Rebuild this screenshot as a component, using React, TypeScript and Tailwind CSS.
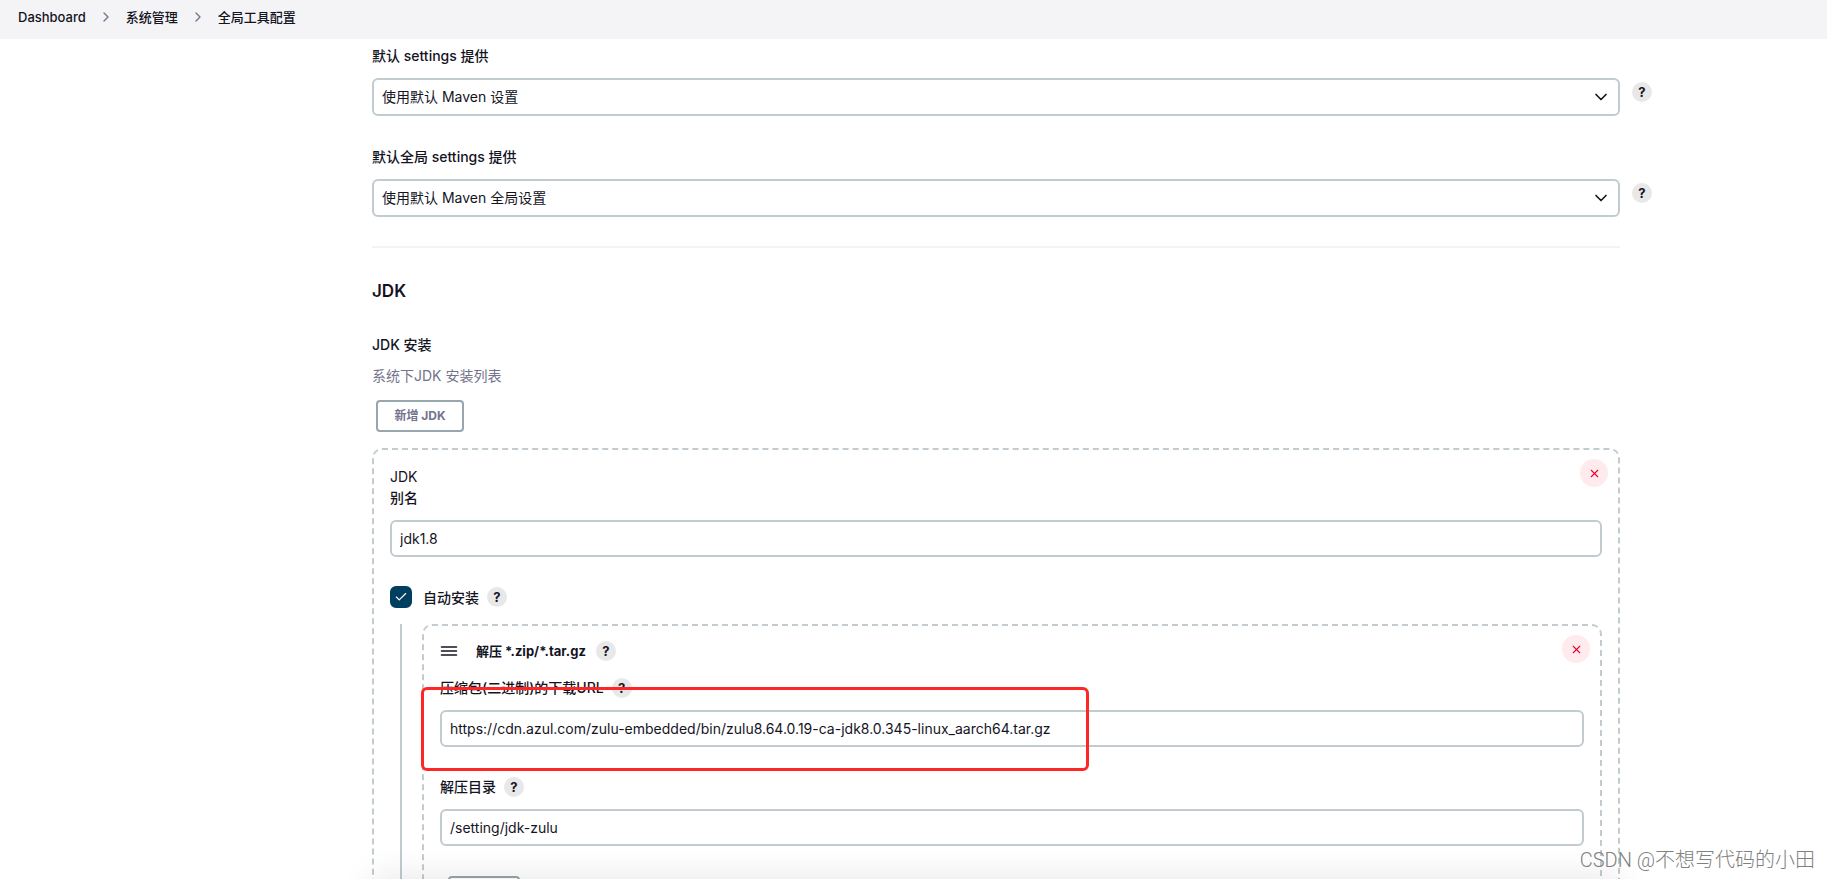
import { ReactNode } from "react";
import { Check, ChevronDown, ChevronRight, X } from "lucide-react";

const inputClass =
  "block h-[37px] w-full rounded-md border-2 border-[#c1cbd0] bg-white px-2 text-sm text-[#14141f] outline-none focus:border-[#0b6aa2]";

function HelpButton({ topic }: { topic: string }) {
  return (
    <button
      type="button"
      aria-label={`帮助: ${topic}`}
      className="flex size-5 shrink-0 items-center justify-center rounded-full bg-[#e8e8e9] text-[13px] leading-5 font-bold text-[#14141f]"
    >
      ?
    </button>
  );
}

function DeleteButton() {
  return (
    <button
      type="button"
      aria-label="删除"
      className="absolute top-[9px] right-[10px] flex size-7 items-center justify-center rounded-full bg-[#ffebed] text-[#e6002f]"
    >
      <X size={13} strokeWidth={2} />
    </button>
  );
}

function SelectField({ id, label, value }: { id: string; label: string; value: string }) {
  return (
    <div>
      <label htmlFor={id} className="mb-3 block w-fit font-medium">
        {label}
      </label>
      <div className="flex items-start gap-3">
        <div className="relative min-w-0 flex-1">
          <select
            id={id}
            className="block h-[38px] w-full appearance-none rounded-md border-2 border-[#c1cbd0] bg-white px-2 text-sm text-[#14141f] outline-none"
          >
            <option>{value}</option>
          </select>
          <ChevronDown size={20} className="pointer-events-none absolute top-[9px] right-[9px]" />
        </div>
        <div className="pt-1">
          <HelpButton topic={label} />
        </div>
      </div>
    </div>
  );
}

function TextField({ id, label, value, children }: { id: string; label: string; value: string; children?: ReactNode }) {
  return (
    <div className="relative">
      <div className="mb-3 flex items-center gap-2">
        <label htmlFor={id} className="leading-5 font-medium">
          {label}
        </label>
        <HelpButton topic={label} />
      </div>
      <input id={id} type="text" defaultValue={value} className={inputClass} />
      {children}
    </div>
  );
}

function Breadcrumbs() {
  return (
    <nav aria-label="Breadcrumb" className="h-[39px] shrink-0 bg-[#f4f4f7] px-[18px]">
      <ol className="flex h-[34px] items-center gap-3 text-[13px] font-medium">
        <li><a href="#">Dashboard</a></li>
        <li aria-hidden="true"><ChevronRight size={16} className="text-[#73738c]" /></li>
        <li><a href="#">系统管理</a></li>
        <li aria-hidden="true"><ChevronRight size={16} className="text-[#73738c]" /></li>
        <li><a href="#">全局工具配置</a></li>
      </ol>
    </nav>
  );
}

function Installer() {
  return (
    <div className="relative min-w-0 flex-1 rounded-[10px] border-2 border-dashed border-[#c1cbd0] px-4 pt-[15px] pb-4">
      <DeleteButton />
      <div className="mb-[17px] flex items-center gap-[10px]">
        <button type="button" aria-label="拖动" className="mr-2 flex h-5 w-[18px] items-center">
          <svg width="18" height="12" viewBox="0 0 18 12" fill="none" stroke="currentColor" strokeWidth="1.6">
            <path d="M1.5 2h15M1.5 6h15M1.5 10h15" strokeLinecap="round" />
          </svg>
        </button>
        <span className="text-[13px] leading-5 font-bold">解压 *.zip/*.tar.gz</span>
        <HelpButton topic="解压" />
      </div>

      <div className="flex flex-col gap-[30px]">
        <TextField
          id="archive-url"
          label="压缩包(二进制)的下载URL"
          value="https://cdn.azul.com/zulu-embedded/bin/zulu8.64.0.19-ca-jdk8.0.345-linux_aarch64.tar.gz"
        >
          {/* Highlight around the download URL */}
          <div className="pointer-events-none absolute top-[9px] -left-[19px] h-[84px] w-[668px] rounded-md border-3 border-[#ff2626]"></div>
        </TextField>
        <TextField id="archive-dir" label="解压目录" value="/setting/jdk-zulu" />
        <div className="px-2">
          <button
            type="button"
            aria-label="删除安装"
            className="block h-8 w-[72px] rounded border-2 border-[#98a6ad]"
          ></button>
        </div>
      </div>
    </div>
  );
}

export default function App() {
  return (
    <div className="relative flex h-screen flex-col overflow-hidden bg-white font-['Inter','Noto_Sans_CJK_SC',sans-serif] text-sm leading-[21px] text-[#14141f]">
      <Breadcrumbs />

      <main className="min-h-0 flex-1 overflow-hidden pt-[6px] pr-[175px] pl-[372px]">
        <div className="flex flex-col gap-[30px]">
          <SelectField id="settings" label="默认 settings 提供" value="使用默认 Maven 设置" />
          <SelectField id="global-settings" label="默认全局 settings 提供" value="使用默认 Maven 全局设置" />
        </div>

        <section className="mt-[29px] mr-8 border-t-2 border-[#f3f3f8] pt-[31px]">
          <h2 className="mb-[31px] text-[17px] leading-6 font-semibold">JDK</h2>
          <h3 className="mb-[10px] font-medium">JDK 安装</h3>
          <p className="mb-[14px] text-[#73738c]">系统下JDK 安装列表</p>
          <button
            type="button"
            className="mb-4 ml-1 block h-8 w-[88px] rounded border-2 border-[#98a6ad] text-xs font-bold text-[#73738c]"
          >
            新增 JDK
          </button>

          <div className="relative rounded-[10px] border-2 border-dashed border-[#c1cbd0] p-4">
            <DeleteButton />
            <div>JDK</div>
            <label htmlFor="jdk-name" className="mb-3 block w-fit font-medium">
              别名
            </label>
            <input id="jdk-name" type="text" defaultValue="jdk1.8" className={inputClass} />

            <div className="mt-[29px] mb-4 flex items-center gap-2">
              <label className="relative flex h-[22px] items-center gap-[11px] font-medium">
                <input
                  type="checkbox"
                  defaultChecked
                  className="peer size-[22px] appearance-none rounded-md border-2 border-[#c1cbd0] checked:border-[#003f60] checked:bg-[#003f60]"
                />
                <Check
                  size={14}
                  strokeWidth={2}
                  className="pointer-events-none absolute left-1 text-white opacity-0 peer-checked:opacity-100"
                />
                自动安装
              </label>
              <HelpButton topic="自动安装" />
            </div>

            <div className="ml-[10px] flex gap-5">
              <div className="w-[2px] bg-[#c1cbd0]"></div>
              <Installer />
            </div>
          </div>
        </section>
      </main>

      {/* Shadow of the save bar sitting below the fold */}
      <div className="pointer-events-none absolute right-[207px] -bottom-12 left-[372px] h-12 shadow-[0_0_36px_rgba(0,0,0,0.11)]"></div>

      <div className="pointer-events-none absolute right-3 bottom-[5px] font-['Roboto','Noto_Sans_CJK_SC',sans-serif] text-xl leading-7 font-light text-[#808080]">
        CSDN @不想写代码的小田
      </div>
    </div>
  );
}
